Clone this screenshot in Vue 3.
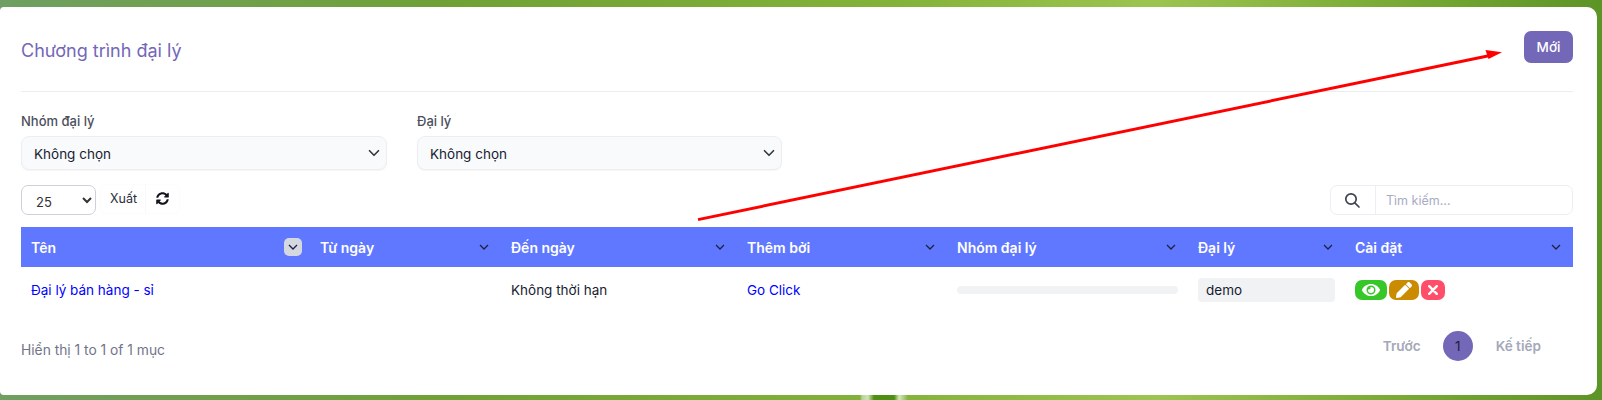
<script setup>
const cols = [
  { name: 'Tên', width: 289 },
  { name: 'Từ ngày', width: 191 },
  { name: 'Đến ngày', width: 236 },
  { name: 'Thêm bởi', width: 210 },
  { name: 'Nhóm đại lý', width: 241 },
  { name: 'Đại lý', width: 157 },
  { name: 'Cài đặt', width: 228 }
]
</script>

<template>
  <div class="page">
    <div class="card">
      <div class="card-head">
        <h1 class="title">Chương trình đại lý</h1>
        <button class="btn-new">Mới</button>
      </div>

      <div class="filters">
        <div class="filter">
          <label>Nhóm đại lý</label>
          <select class="filter-select"><option>Không chọn</option></select>
        </div>
        <div class="filter filter-2">
          <label>Đại lý</label>
          <select class="filter-select"><option>Không chọn</option></select>
        </div>
      </div>

      <div class="toolbar">
        <select class="page-size"><option>25</option></select>
        <div class="tools">
          <span class="tool-export">Xuất</span>
          <span class="tool-refresh">
            <svg width="13" height="13" viewBox="0 0 512 512" fill="#14141f">
              <path d="M370.72 133.28C339.458 104.008 298.888 87.962 255.848 88c-77.458.068-144.328 53.178-162.791 126.85-1.344 5.363-6.122 9.15-11.651 9.15H24.103c-7.498 0-13.194-6.807-11.807-14.176C33.933 94.924 134.813 8 256 8c66.448 0 126.791 26.136 171.315 68.685L463.03 40.97C478.149 25.851 504 36.559 504 57.941V192c0 13.255-10.745 24-24 24H345.941c-21.382 0-32.09-25.851-16.971-40.971l41.75-41.749zM32 296h134.059c21.382 0 32.09 25.851 16.971 40.971l-41.75 41.75c31.262 29.273 71.835 45.319 114.876 45.28 77.418-.07 144.315-53.144 162.787-126.849 1.344-5.363 6.122-9.15 11.651-9.15h57.304c7.498 0 13.194 6.807 11.807 14.176C478.067 417.076 377.187 504 256 504c-66.448 0-126.791-26.136-171.315-68.685L48.97 471.03C33.851 486.149 8 475.441 8 454.059V320c0-13.255 10.745-24 24-24z"/>
            </svg>
          </span>
        </div>
        <div class="search">
          <span class="search-icon">
            <svg width="16" height="16" viewBox="0 0 16 16" fill="none" stroke="#3f4254" stroke-width="1.7">
              <circle cx="7" cy="7" r="5.2"/>
              <path d="M10.8 10.8 15 15" stroke-linecap="round"/>
            </svg>
          </span>
          <input class="search-input" placeholder="Tìm kiếm..." />
        </div>
      </div>

      <table class="grid">
        <colgroup>
          <col v-for="c in cols" :key="c.name" :style="{ width: c.width + 'px' }" />
        </colgroup>
        <thead>
          <tr>
            <th v-for="(c, i) in cols" :key="c.name">
              <div class="th-inner">
                <span>{{ c.name }}</span>
                <span class="sort" :class="{ active: i === 0 }">
                  <svg width="10" height="6" viewBox="0 0 10 6" fill="none" stroke="#1e2140" stroke-width="1.3">
                    <path d="M1 1l4 4 4-4"/>
                  </svg>
                </span>
              </div>
            </th>
          </tr>
        </thead>
        <tbody>
          <tr>
            <td><a href="#">Đại lý bán hàng - sỉ</a></td>
            <td></td>
            <td>Không thời hạn</td>
            <td><a href="#">Go Click</a></td>
            <td><div class="empty-pill"></div></td>
            <td><div class="demo-pill">demo</div></td>
            <td>
              <div class="actions">
                <span class="act act-view">
                  <svg width="18" height="16" viewBox="0 0 576 512" fill="#fff">
                    <path d="M572.52 241.4C518.29 135.59 410.93 64 288 64S57.68 135.64 3.48 241.41a32.35 32.35 0 0 0 0 29.19C57.71 376.41 165.07 448 288 448s230.32-71.64 284.52-177.41a32.35 32.35 0 0 0 0-29.19zM288 400a144 144 0 1 1 144-144 143.93 143.93 0 0 1-144 144zm0-240a95.31 95.31 0 0 0-25.31 3.79 47.85 47.85 0 0 1-66.9 66.9A95.78 95.78 0 1 0 288 160z"/>
                  </svg>
                </span>
                <span class="act act-edit">
                  <svg width="16" height="16" viewBox="0 0 512 512" fill="#fff">
                    <path d="M497.9 142.1l-46.1 46.1c-4.7 4.7-12.3 4.7-17 0l-111-111c-4.7-4.7-4.7-12.3 0-17l46.1-46.1c18.7-18.7 49.1-18.7 67.9 0l60.1 60.1c18.8 18.7 18.8 49.1 0 67.9zM284.2 99.8L21.6 362.4.4 483.9c-2.9 16.4 11.4 30.6 27.8 27.8l121.5-21.3 262.6-262.6c4.7-4.7 4.7-12.3 0-17l-111-111c-4.8-4.7-12.4-4.7-17.1 0z"/>
                  </svg>
                </span>
                <span class="act act-del">
                  <svg width="10" height="10" viewBox="0 0 10 10" fill="none" stroke="#fff" stroke-width="2.4" stroke-linecap="round">
                    <path d="M1.2 1.2l7.6 7.6M8.8 1.2L1.2 8.8"/>
                  </svg>
                </span>
              </div>
            </td>
          </tr>
        </tbody>
      </table>

      <div class="foot">
        <span class="info">Hiển thị 1 to 1 of 1 mục</span>
        <div class="pager">
          <span class="pager-link">Trước</span>
          <span class="pager-num">1</span>
          <span class="pager-link">Kế tiếp</span>
        </div>
      </div>
    </div>

    <!-- mui ten do ve tren anh chup -->
    <svg class="arrow" width="1602" height="400" viewBox="0 0 1602 400">
      <path d="M698 219.6 1490 55.5" stroke="#ff0000" stroke-width="3" fill="none"/>
      <path d="M1502 52.2 1485.5 50 1488.5 59z" fill="#ff0000"/>
    </svg>
  </div>
</template>

<style>
html, body {
  margin: 0;
  background: #5f9a35;
}
</style>

<style scoped>
.page {
  position: relative;
  box-sizing: border-box;
  width: 1602px;
  height: 400px;
  overflow: hidden;
  padding: 7px 5px 5px 0;
  background:
    linear-gradient(90deg, transparent 860px, #b5d49a 862px, #cfe3b5 868px, #4d8f12 874px, #4d8f12 894px, #d5e8b0 899px, #a8cc80 904px, transparent 908px) bottom / 100% 5px no-repeat,
    linear-gradient(90deg, #6f9f62 0, #6fa136 28%, #82b238 55%, #9cc450 72%, #7dae37 85%, #5c9426 100%);
  font-family: Inter, "Noto Sans", sans-serif;
}
.card {
  box-sizing: border-box;
  height: 388px;
  padding: 24px 24px 0 21px;
  background: #fff;
  border-radius: 4px 10px 10px 4px;
}
.card-head {
  display: flex;
  justify-content: space-between;
  align-items: flex-start;
  height: 60px;
  border-bottom: 1px solid #ebedf2;
}
.title {
  margin: 0;
  font-size: 18px;
  line-height: 40px;
  font-weight: 400;
  color: #7367b8;
}
.btn-new {
  width: 49px;
  height: 32px;
  padding: 0;
  border: none;
  border-radius: 7px;
  background: #7367b8;
  color: #fff;
  font-family: inherit;
  font-size: 13.5px;
  font-weight: 500;
}

.filters {
  display: flex;
  margin-top: 19px;
}
.filter {
  width: 366px;
}
.filter-2 {
  margin-left: 30px;
  width: 365px;
}
.filter label {
  display: block;
  height: 25px;
  line-height: 20px;
  font-size: 13px;
  font-weight: 500;
  color: #4b4f5c;
}
.filter-select {
  display: block;
  box-sizing: border-box;
  width: 100%;
  height: 34px;
  padding: 2px 32px 0 12px;
  border: 1px solid #eceef2;
  border-radius: 8px;
  background-color: #f9fafb;
  background-image: url("data:image/svg+xml,%3csvg xmlns='http://www.w3.org/2000/svg' viewBox='0 0 16 16'%3e%3cpath fill='none' stroke='%23343a40' stroke-linecap='round' stroke-linejoin='round' stroke-width='2.2' d='m2 5 6 6 6-6'/%3e%3c/svg%3e");
  background-repeat: no-repeat;
  background-position: right 5px center;
  background-size: 14px 12px;
  appearance: none;
  font-family: inherit;
  font-size: 13.5px;
  color: #181c32;
  box-shadow: 0 1px 1px rgba(0, 0, 0, 0.04);
}

.toolbar {
  display: flex;
  align-items: flex-start;
  margin-top: 15px;
  height: 42px;
}
.page-size {
  box-sizing: border-box;
  width: 75px;
  height: 30px;
  padding: 3px 0 0 10px;
  border: 1px solid #ced0da;
  border-radius: 7px;
  background: #fff;
  font-family: inherit;
  font-size: 13px;
  color: #333;
}
.tools {
  display: flex;
  margin-left: 5px;
  height: 28px;
  border-radius: 5px;
  box-shadow: 0 0 2px rgba(0, 0, 0, 0.05);
}
.tool-export {
  width: 43px;
  padding-left: 1px;
  line-height: 28px;
  text-align: center;
  font-size: 12.5px;
  color: #2b2e3a;
  border-right: 1px solid #f7f8f9;
}
.tool-refresh {
  display: flex;
  align-items: center;
  justify-content: center;
  width: 33px;
  padding-bottom: 2px;
  box-sizing: border-box;
}
.search {
  display: flex;
  box-sizing: border-box;
  width: 243px;
  height: 30px;
  margin-left: auto;
  border: 1px solid #eceef3;
  border-radius: 7px;
}
.search-icon {
  display: flex;
  align-items: center;
  justify-content: center;
  width: 45px;
  padding-right: 3px;
  box-sizing: border-box;
  border-right: 1px solid #eceef3;
}
.search-input {
  flex: 1;
  min-width: 0;
  padding: 0 10px;
  border: none;
  outline: none;
  background: transparent;
  font-family: inherit;
  font-size: 12.5px;
}
.search-input::placeholder {
  color: #a7abc3;
}

.grid {
  width: 1552px;
  table-layout: fixed;
  border-collapse: collapse;
}
.grid th {
  height: 40px;
  padding: 0 10px;
  background: #5f78ff;
  color: #fff;
  font-size: 14px;
  font-weight: 600;
  text-align: left;
}
.th-inner {
  display: flex;
  align-items: center;
  justify-content: space-between;
}
.sort {
  display: flex;
  align-items: center;
  justify-content: center;
  width: 18px;
  height: 18px;
  margin-right: -2px;
  border-radius: 5px;
}
.sort.active {
  margin-right: -2px;
  background: #d5d8e0;
}
.grid td {
  height: 46px;
  padding: 0 10px;
  font-size: 13.5px;
  color: #181c32;
  vertical-align: middle;
}
.grid td a {
  color: #0000ff;
  text-decoration: none;
}
.empty-pill {
  width: 221px;
  height: 8px;
  border-radius: 4px;
  background: #f1f2f4;
}
.demo-pill {
  box-sizing: border-box;
  width: 137px;
  height: 24px;
  padding-left: 8px;
  line-height: 24px;
  border-radius: 4px;
  background: #f1f2f4;
  font-size: 13.5px;
}
.actions {
  display: flex;
  gap: 2px;
}
.act {
  display: flex;
  align-items: center;
  justify-content: center;
  height: 20px;
  border-radius: 7px;
}
.act-view {
  width: 32px;
  background: #38c728;
}
.act-edit {
  width: 30px;
  background: #cb8b00;
}
.act-del {
  width: 24px;
  background: #ff4d6a;
}

.foot {
  display: flex;
  justify-content: space-between;
  align-items: center;
  margin-top: 18px;
  height: 30px;
}
.info {
  padding-top: 8px;
  font-size: 13.8px;
  color: #71748a;
}
.pager {
  display: flex;
  align-items: center;
  margin-right: 32px;
}
.pager-link {
  font-size: 13.6px;
  font-weight: 600;
  color: #a5a8b8;
}
.pager-num {
  width: 30px;
  height: 30px;
  margin: 0 23px 0 22px;
  line-height: 30px;
  text-align: center;
  border-radius: 50%;
  background: #7367b8;
  color: #1e1e3c;
  font-size: 13.5px;
}

.arrow {
  position: absolute;
  left: 0;
  top: 0;
  pointer-events: none;
}
</style>
